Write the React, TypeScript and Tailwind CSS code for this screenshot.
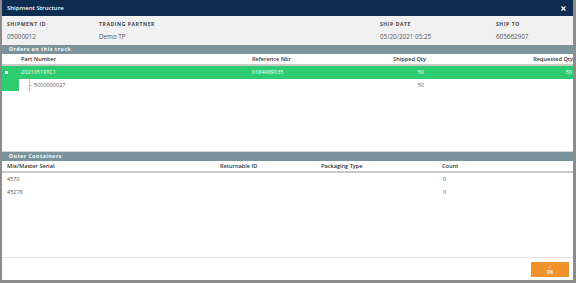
import { Check, X } from 'lucide-react';

const orders = [
  { part: '20210519TC1', ref: '0184989035', shipped: '50', requested: '50' },
];

const containers = [
  { serial: '4570', returnable: '', packaging: '', count: '0' },
  { serial: '45278', returnable: '', packaging: '', count: '0' },
];

function SectionBar({ title }: { title: string }) {
  return (
    <div className="h-[9px] bg-[#7b949c] flex items-center pl-[7px]">
      <span className="text-[5px] font-bold tracking-[0.6px] text-white leading-none">{title}</span>
    </div>
  );
}

export default function App() {
  return (
    <div className="w-[576px] h-[283px] bg-[#8c8c8c] pl-[2px] pr-[3px] pb-[3px] font-['Open_Sans',sans-serif]">
      <div className="h-full bg-white flex flex-col">
        {/* title */}
        <div className="h-[16px] bg-[#0e2d50] flex items-center justify-between pl-[5px] pr-[6px]">
          <span className="text-[6px] font-semibold text-white leading-none">Shipment Structure</span>
          <X className="w-[7px] h-[7px] text-white" strokeWidth={4} />
        </div>

        {/* shipment header */}
        <div className="h-[29px] bg-[#f1f1f1] grid grid-cols-[92px_281px_116px_1fr] pl-[5px] pt-[6px]">
          {[
            ['SHIPMENT ID', '05000012'],
            ['TRADING PARTNER', 'Demo TP'],
            ['SHIP DATE', '05/20/2021 05:25'],
            ['SHIP TO', '605662907'],
          ].map(([label, value]) => (
            <div key={label} className="flex flex-col">
              <span className="text-[5px] font-bold tracking-[0.6px] text-[#444] leading-[5px]">{label}</span>
              <span className="text-[6.3px] text-[#555] leading-none mt-[7px]">{value}</span>
            </div>
          ))}
        </div>

        {/* orders */}
        <div className="h-[106px] flex flex-col">
          <SectionBar title="Orders on this truck" />
          <div className="h-[12px] grid grid-cols-[17px_231px_100px_76px_1fr] items-center border-b-2 border-[#c9c9c9] text-[5.6px] font-semibold text-[#333]">
            <span />
            <span className="pl-[2px]">Part Number</span>
            <span className="pl-[2px]">Reference Nbr</span>
            <span className="text-right">Shipped Qty</span>
            <span className="text-right">Requested Qty</span>
          </div>
          {orders.map((o) => (
            <div key={o.part}>
              <div className="h-[13px] bg-[#2ecc71] grid grid-cols-[17px_231px_100px_76px_1fr] items-center text-[5.5px] text-white">
                <span className="pl-[3px]">
                  <span className="block w-[3px] h-[3px] bg-white" />
                </span>
                <span className="pl-[2px]">{o.part}</span>
                <span className="pl-[2px]">{o.ref}</span>
                <span className="text-right pr-[2px]">{o.shipped}</span>
                <span className="text-right pr-[1px]">{o.requested}</span>
              </div>
              <div className="h-[12px] grid grid-cols-[17px_231px_100px_76px_1fr] items-center text-[5.5px] text-[#555]">
                <span className="h-full bg-[#2ecc71]" />
                <span className="h-full flex items-center pl-[10px]">
                  <span className="relative h-full w-[4px] border-l border-[#bbb] mr-[1px]">
                    <span className="absolute left-0 top-[6px] w-[2px] border-t border-[#bbb]" />
                  </span>
                  5000000027
                </span>
                <span />
                <span className="text-right pr-[2px]">50</span>
                <span />
              </div>
            </div>
          ))}
        </div>

        {/* outer containers */}
        <div className="h-[106px] flex flex-col border-t border-[#d4d4d4]">
          <SectionBar title="Outer Containers" />
          <div className="h-[12px] grid grid-cols-[213px_101px_121px_1fr] items-center pl-[5px] border-b-2 border-[#c9c9c9] text-[5.6px] font-semibold text-[#333]">
            <span>Mix/Master Serial</span>
            <span>Returnable ID</span>
            <span>Packaging Type</span>
            <span>Count</span>
          </div>
          {containers.map((c) => (
            <div key={c.serial} className="h-[12.5px] grid grid-cols-[213px_101px_121px_1fr] items-center pl-[5px] text-[5.5px] text-[#555]">
              <span>{c.serial}</span>
              <span>{c.returnable}</span>
              <span>{c.packaging}</span>
              <span className="pl-[1px]">{c.count}</span>
            </div>
          ))}
        </div>

        {/* footer */}
        <div className="flex-1 border-t border-[#dedede] flex items-start justify-end pr-[4px] pt-[4px]">
          <button className="w-[38px] h-[15px] bg-[#f0922c] flex flex-col items-center justify-center text-white">
            <Check className="w-[4px] h-[4px]" strokeWidth={3} />
            <span className="text-[4.5px] font-bold leading-none mt-[1px]">OK</span>
          </button>
        </div>
      </div>
    </div>
  );
}
